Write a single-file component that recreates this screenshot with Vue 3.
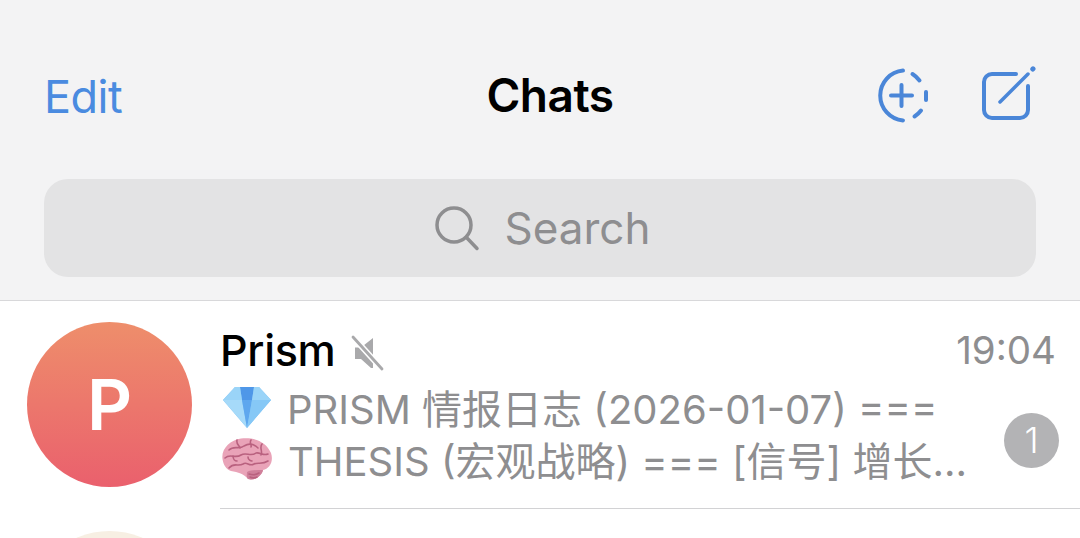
<template>
  <div class="screen">
    <header class="top">
      <nav class="nav">
        <span class="edit">Edit</span>
        <span class="title">Chats</span>
        <div class="nav-icons">
          <svg class="story-icon" width="56" height="56" viewBox="0 0 56 56" fill="none" stroke="#4a86d8" stroke-width="4" stroke-linecap="round">
            <path d="M29 2.600A25 25 0 0 0 29 52.400" />
            <path d="M38.500 6A25 25 0 0 1 45.500 12.500" />
            <path d="M52 24V32" />
            <path d="M47 42.500A25 25 0 0 1 40.500 48.500" />
            <path d="M17 27.500H38M27.500 17V38" />
          </svg>
          <svg class="compose-icon" width="56" height="56" viewBox="0 0 56 56" fill="none" stroke="#4a86d8" stroke-linecap="round" stroke-linejoin="round">
            <path stroke-width="4" d="M35 8H11A8 8 0 0 0 3 16V44A8 8 0 0 0 11 52H39A8 8 0 0 0 47 44V20" />
            <path stroke-width="3.500" d="M19 36L47 8" />
            <path stroke-width="5" d="M51.800 3L52 2.800" />
          </svg>
        </div>
      </nav>
      <div class="search">
        <svg width="48" height="48" viewBox="0 0 48 48" fill="none" stroke="#8e8e90" stroke-width="3.500" stroke-linecap="round">
          <circle cx="21" cy="21" r="17" />
          <path d="M33.500 33.500L44 44.500" />
        </svg>
        <span>Search</span>
      </div>
    </header>

    <section class="chat">
      <div class="avatar">P</div>
      <div class="chat-main">
        <div class="name-row">
          <span class="name">Prism</span>
          <svg class="mute" width="34" height="36" viewBox="0 0 34 36" fill="none">
            <path fill="#a9a9ab" d="M4 12.500H10L22 3V33H20L10 24H4Z" />
            <path stroke="#fff" stroke-width="6" d="M1 1L31 34" />
            <path stroke="#a9a9ab" stroke-width="2.800" stroke-linecap="round" d="M2 2L31 34" />
          </svg>
          <span class="time">19:04</span>
        </div>
        <div class="preview-row">
          <div class="preview">
            <div class="line">
              <svg class="emoji gem" width="50" height="44" viewBox="0 0 50 44">
                <path fill="#78bdf4" d="M13 2H37L49 15L25 43L1 15Z" />
                <path fill="#4f97e8" d="M18 2H32L30 15H20Z" />
                <path fill="#a6daf9" d="M1 15H20L25 43Z" />
                <path fill="#5ea7ee" d="M20 15H30L25 43Z" />
                <path fill="#86c8f6" d="M30 15H49L25 43Z" />
                <path fill="#9ad4f8" d="M13 2H18L20 15H1ZM32 2H37L49 15H30Z" />
              </svg>
              <span>PRISM 情报日志 (2026-01-07) ===</span>
            </div>
            <div class="line">
              <svg class="emoji brain" width="52" height="44" viewBox="0 0 52 44">
                <path fill="#e9a3b8" d="M1.500 22C0 12 9 3 20 1.500C32 0 45 4 50 16C53 25 48 32 42 33C41 39 33 44 27 42C23 37 17 35 10 34C5 32 2.500 28 1.500 22Z" />
                <path fill="#cf7f9a" d="M26 35C30 33 36 33 42 33C41 39 33 44 27 42C25 40 26 37 26 35Z" />
                <g fill="none" stroke="#b9617f" stroke-width="1.600" stroke-linecap="round">
                  <path d="M8 13C13 8 18 13 23 9C28 6 33 7 37 11" />
                  <path d="M16 3C15 7 18 8 19 11M30 3C28 6 31 8 30 10M41 7C38 11 42 14 40 18" />
                  <path d="M4 21C9 16 14 22 20 18C25 15 30 20 35 16C39 15 42 19 47 17" />
                  <path d="M8 31C13 25 17 30 22 27C26 24 28 30 33 27C37 25 41 28 47 24" />
                  <path d="M12 19C12 22 14 24 16 24M27 20C27 23 30 24 31 24" />
                  <path d="M28 37C31 38 35 38 38 36M29 40C31 41 34 41 36 40" />
                </g>
              </svg>
              <span>THESIS (宏观战略) === [信号] 增长...</span>
            </div>
          </div>
          <div class="badge">1</div>
        </div>
      </div>
    </section>

    <section class="chat next">
      <div class="avatar beige"></div>
      <div class="chat-main">
        <div class="name-row">
          <span class="name">今日市场快讯</span>
        </div>
      </div>
    </section>
  </div>
</template>

<script setup>
</script>

<style>
html, body { margin: 0; background: #fff; overflow: hidden; }
</style>

<style scoped>
.screen { width: 1080px; height: 538px; overflow: hidden; font-family: Inter, "Noto Sans CJK SC", sans-serif; }
.top { height: 301px; box-sizing: border-box; padding: 0 44px; background: #f3f3f4; border-bottom: 1px solid #d8d8da; }
.nav { height: 179px; display: grid; grid-template-columns: 1fr auto 1fr; align-items: center; padding-top: 11px; box-sizing: border-box; }
.edit { font-size: 45px; color: #4a8be0; letter-spacing: -0.5px; margin-top: 2px; }
.title { padding-left: 20px; font-size: 46px; font-weight: 600; color: #000; letter-spacing: -0.5px; }
.nav-icons { display: flex; gap: 51px; height: 58px; justify-self: end; margin-right: -1px; }
.story-icon { margin-top: 2px; }
.search { height: 98px; border-radius: 24px; background: #e3e3e4; display: flex; align-items: center; justify-content: center; gap: 23px; color: #8e8e90; font-size: 44px; padding-left: 4px; }
.chat { display: flex; gap: 28px; padding-left: 27px; }
.avatar { width: 165px; height: 165px; flex-shrink: 0; margin-top: 21px; border-radius: 50%; background: linear-gradient(#ee8e6b, #ea606d); color: #fff; font-size: 70px; font-weight: 600; display: flex; align-items: center; justify-content: center; }
.chat-main { flex: 1; height: 208px; box-sizing: border-box; border-bottom: 1px solid #d2d2d4; padding-right: 24px; }
.name-row { display: flex; align-items: center; height: 50px; margin-top: 24px; }
.name { font-size: 43px; font-weight: 500; color: #000; letter-spacing: -0.3px; }
.mute { margin-left: 16px; margin-top: 6px; }
.time { margin-left: auto; font-size: 38.5px; color: #8e8e90; }
.preview-row { display: flex; justify-content: space-between; align-items: center; }
.preview { margin-top: 6px; }
.line { display: flex; align-items: center; gap: 15px; height: 52px; font-size: 40px; color: #8e8e90; white-space: nowrap; }
.emoji { flex-shrink: 0; }
.gem { margin-left: 2px; }
.brain { margin-left: 1px; }
.badge { width: 55px; height: 55px; border-radius: 50%; background: #b3b3b5; color: #fff; font-size: 36px; font-weight: 300; display: flex; align-items: center; justify-content: center; margin-right: -3px; margin-top: 20px; }
.next .avatar { margin-top: 22px; }
.next .chat-main { border: none; }
.next .name-row { margin-top: 24px; }
.beige { background: #f7efe3; }
</style>
